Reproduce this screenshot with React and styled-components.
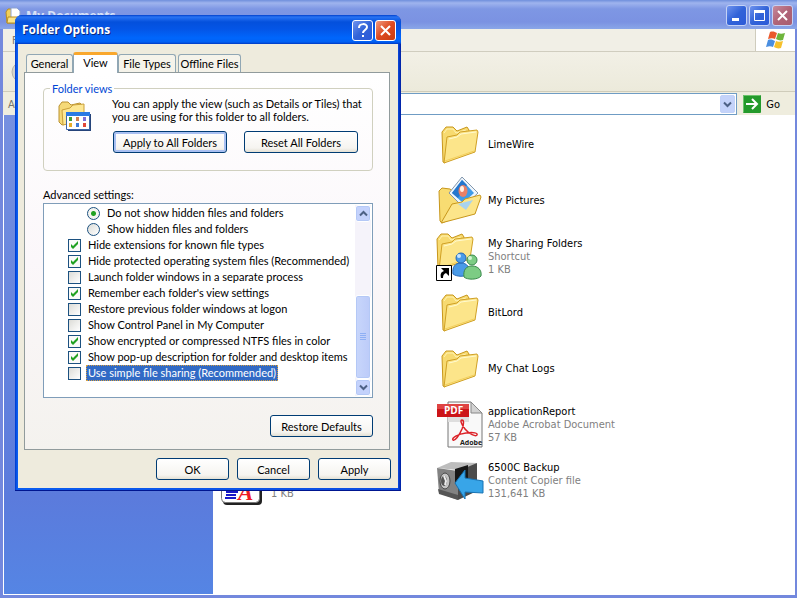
import React, { useState } from 'react';
import styled, { createGlobalStyle, css } from 'styled-components';

const GlobalStyle = createGlobalStyle`
    * { box-sizing: border-box; }
    body {
        margin: 0;
        overflow: hidden;
        font: 11px/13px 'DejaVu Sans Condensed', 'DejaVu Sans', sans-serif;
        color: #000;
    }
    button, input { font: inherit; color: inherit; margin: 0; padding: 0; }
    svg { display: block; flex: none; }
`;

/**
* Explorer window
*/
const Explorer = styled.main`
    display: flex;
    flex-direction: column;
    height: 100vh;
    padding: 0 2px 3px 3px;
    background: #7388dd;
`;

const ExplorerTitle = styled.header`
    display: flex;
    align-items: center;
    flex: none;
    height: 29px;
    gap: 4px;
    padding: 2px 4px 0 5px;
    margin: 0 -2px 0 -3px;
    background: linear-gradient(#6f8fdc 0, #9fb4ee 3px, #7e97e4 9px, #7b92e2 22px, #8aa6e8 29px);
    color: #d8e2f8;
    font: bold 12px/18px 'Open Sans', sans-serif;
`;

const ExplorerName = styled.h1`
    flex: 1;
    margin: 0;
    font: inherit;
`;

const Controls = styled.div`
    display: flex;
    gap: 2px;
`;

const tones = {
    blue: 'linear-gradient(135deg, #6f93ee, #3263d8 50%, #2c5ad8)',
    dull: 'linear-gradient(135deg, #c78a9c, #b06478 50%, #a85c70)',
    red: 'linear-gradient(135deg, #f09a80, #dd4a20 50%, #c83c10)',
};

const TitleButton = styled.button`
    display: grid;
    place-items: center;
    width: 21px;
    height: 21px;
    border: 1px solid ${(p) => (p.$active ? '#fff' : '#c4d2f6')};
    border-radius: 3px;
    background: ${(p) => tones[p.$tone]};
`;

const MenuBar = styled.nav`
    display: flex;
    flex: none;
    align-items: center;
    height: 23px;
    padding-left: 9px;
    border-bottom: 1px solid #d0cdbf;
    background: #f1efe6;
    color: #77756c;
`;

const Throbber = styled.div`
    display: grid;
    place-items: center;
    width: 40px;
    height: 22px;
    margin-left: auto;
    border-left: 1px solid #cfccbd;
    background: #fff;
`;

const ToolBar = styled.div`
    display: flex;
    flex: none;
    align-items: center;
    height: 40px;
    padding-left: 8px;
    border-bottom: 1px solid #cfccba;
    background: linear-gradient(#f2f0e6, #eceadb);
`;

const AddressBar = styled.form`
    display: flex;
    flex: none;
    align-items: center;
    height: 23px;
    gap: 6px;
    padding: 1px 15px 0 5px;
    background: #efedde;
    color: #77756c;
`;

const AddressBox = styled.div`
    display: flex;
    flex: 1;
    height: 22px;
    padding: 1px;
    border: 1px solid #6f9cc4;
    background: #fff;
`;

const AddressInput = styled.input`
    flex: 1;
    min-width: 0;
    border: 0;
    outline: 0;
    background: none;
`;

const DropButton = styled.button`
    display: grid;
    place-items: center;
    width: 15px;
    border: 1px solid #c2d2f8;
    border-radius: 2px;
    background: #c4d3fa;
`;

const GoButton = styled.button`
    display: flex;
    align-items: center;
    gap: 5px;
    border: 0;
    background: none;
    color: #000;
`;

const Body = styled.div`
    display: flex;
    flex: 1;
    min-height: 0;
    padding: 0 0 1px 1px;
    background: #fff;
`;

const TaskPane = styled.aside`
    flex: none;
    width: 209px;
    background: linear-gradient(#7690e0 0, #6180dd 60%, #5b7bdc 80%, #5585e4 100%);
`;

const FileGrid = styled.ul`
    display: grid;
    flex: 1;
    grid-template-columns: repeat(2, 217px);
    grid-auto-rows: 56px;
    align-content: start;
    margin: 0;
    padding: 1px 0 0 6px;
    list-style: none;
`;

const FileItem = styled.li`
    display: flex;
    grid-column: ${(p) => p.$column};
    grid-row: ${(p) => p.$row};
    align-items: center;
    gap: 4px;
`;

const FileText = styled.div`
    display: flex;
    flex-direction: column;
    justify-content: ${(p) => (p.$last ? 'flex-end' : 'center')};
    height: 39px;
`;

const FileMeta = styled.span`
    color: #7f7f7f;
`;

/**
* Folder Options dialog
*/
const Dialog = styled.section`
    position: absolute;
    top: 15px;
    left: 15px;
    width: 386px;
    padding: 0 3px 3px;
    border-radius: 7px 7px 0 0;
    background: linear-gradient(90deg, #0038c8, #0a5cf0 2px, #0a4ce0 383px, #001ea0);
    box-shadow: inset 0 -1px #001690;
    font: 11px/13px Lato, 'Liberation Sans', sans-serif;
`;

const DialogTitle = styled.header`
    display: flex;
    align-items: center;
    gap: 2px;
    height: 29px;
    margin: 0 -3px;
    padding: 1px 5px 0 7px;
    border-radius: 7px 7px 0 0;
    background: linear-gradient(#0040cc 0, #2a74f4 2px, #0450dc 7px, #0455e6 14px, #0066fc 23px, #0060f4 27px, #0038c0 29px);
`;

const DialogName = styled.h2`
    flex: 1;
    margin: 0;
    color: #fff;
    font: bold 12px/18px 'Open Sans', sans-serif;
    text-shadow: 1px 1px #0a2a80;
`;

const DialogBody = styled.div`
    padding: 7px 7px 8px 6px;
    background: #eeebdd;
`;

const Tabs = styled.div`
    display: flex;
    align-items: flex-end;
    height: 21px;
    padding-left: 2px;
`;

const Tab = styled.button`
    flex: none;
    width: ${(p) => p.$width}px;
    height: 18px;
    border: 1px solid #91a7b4;
    border-bottom: 0;
    border-radius: 3px 3px 0 0;
    background: #f5f3ea;
    white-space: nowrap;
    ${(p) => p.$selected && css`
        z-index: 1;
        height: 21px;
        margin-bottom: -1px;
        padding-bottom: 3px;
        border-top: 3px solid #f9a72c;
        background: #fff;
    `}
    &:last-of-type { margin-left: 2px; }
`;

const Panel = styled.div`
    display: flex;
    flex-direction: column;
    height: 378px;
    margin-right: 1px;
    padding: 9px 16px 11px 18px;
    border: 1px solid #919b9c;
    background: linear-gradient(#fff, #fbf7fa 50%, #f4f2ee);
`;

const Group = styled.fieldset`
    display: flex;
    gap: 21px;
    min-width: 0;
    height: 89px;
    margin: 0;
    padding: 2px 9px 0 14px;
    border: 1px solid #d0d0bf;
    border-radius: 4px;
`;

const Legend = styled.legend`
    margin-left: -8px;
    padding: 0 2px;
    color: #0046d5;
`;

const GroupText = styled.div`
    flex: 1;
    white-space: nowrap;
`;

const Sentence = styled.p`
    margin: 0 0 8px -1px;
`;

const ButtonRow = styled.div`
    display: flex;
    justify-content: ${(p) => (p.$end ? 'flex-end' : 'flex-start')};
    gap: ${(p) => p.$gap || 8}px;
    margin-top: ${(p) => p.$top || 0}px;
`;

const PushButton = styled.button`
    flex: none;
    width: ${(p) => p.$width || 73}px;
    height: 22px;
    border: 1px solid #003c74;
    border-radius: 3px;
    background: linear-gradient(#fff, #f6f4f0 80%, #e4e0d4);
    box-shadow: ${(p) => (p.$default ? 'inset 0 0 0 2px #a9c0f2' : 'none')};
`;

const ListLabel = styled.div`
    margin: 17px 0 2px;
`;

const ListBox = styled.div`
    display: flex;
    height: 195px;
    padding: 1px;
    border: 1px solid #7f9db9;
    background: #fff;
`;

const Settings = styled.div`
    flex: 1;
    min-width: 0;
`;

const Setting = styled.label`
    display: flex;
    align-items: center;
    gap: 5px;
    height: 16px;
    padding-left: ${(p) => (p.$radio ? 42 : 23)}px;
    white-space: nowrap;
`;

const SettingText = styled.span`
    padding: 1px 2px;
    line-height: 14px;
    ${(p) => p.$selected && css`
        outline: 1px dotted #d8a040;
        outline-offset: -1px;
        background: #316ac5;
        color: #fff;
    `}
`;

const Tick = styled.input`
    flex: none;
    appearance: none;
    width: 13px;
    height: 13px;
    border: 1px solid #1c5180;
    background: linear-gradient(135deg, #dcdcd7, #fff);
    &:checked {
        background: url("data:image/svg+xml,%3Csvg xmlns='http://www.w3.org/2000/svg' viewBox='0 0 11 11'%3E%3Cpath d='M2 4v3l2 2 5-5V1L4 6z' fill='%2321a121'/%3E%3C/svg%3E") center / 11px, #fafaf8;
    }
`;

const Dot = styled(Tick)`
    border-radius: 50%;
    &:checked { background: radial-gradient(circle, #21a121 0 2px, #f4f4f0 3px); }
`;

const ScrollBar = styled.div`
    display: flex;
    flex-direction: column;
    flex: none;
    width: 16px;
    background: #f5f3fa;
`;

const ScrollButton = styled.button`
    display: grid;
    place-items: center;
    height: 17px;
    border: 1px solid #fff;
    border-radius: 3px;
    background: #c4d2fc;
    box-shadow: inset 0 0 0 1px #b4c8f6;
`;

const ScrollTrack = styled.div`
    display: flex;
    flex: 1;
    flex-direction: column;
    justify-content: flex-end;
`;

const Thumb = styled.div`
    display: grid;
    place-items: center;
    height: 84px;
    border: 1px solid #fff;
    border-radius: 3px;
    background: linear-gradient(90deg, #c8d6fb, #bccbf9);
    box-shadow: inset 0 0 0 1px #b4c8f6;
`;

const Chevron = ({ up }) => (
    <svg width="9" height="7" viewBox="0 0 9 7">
        <path d={up ? 'M1 5.5 4.500 2 8 5.500' : 'M1 1.500 4.500 5 8 1.500'} fill="none" stroke="#4d6185" strokeWidth="2" />
    </svg>
);

const FolderShape = () => (
    <g strokeLinejoin="round">
        <path d="M6 12 10 7h7l4 4L31 7l2 3v4L9 43l-2-1z" fill="#f7da70" stroke="#c8971c" />
        <path d="M8 13 11 9h6l3 4 10-3" fill="none" stroke="#fff2b0" />
        <path d="M11 17l10-2 3-3 17-2 1 2-3 20L8 43z" fill="#fce58a" stroke="#d0a024" />
        <path d="M13 19l8-2 4-3 15-2" fill="none" stroke="#fffad0" />
        <path d="M9 41l29-10" fill="none" stroke="#f4d05c" />
    </g>
);

const FolderIcon = () => <svg width="48" height="48"><FolderShape /></svg>;

const PicturesIcon = () => (
    <svg width="48" height="48">
        <path d="M3 15 6 12l8 1 4 3 18-2v20L6 47 4 45z" fill="#f8dc72" stroke="#c8971c" />
        <path d="M26 1 42 17 27 31 13 17z" fill="#eef5fc" stroke="#8297ad" />
        <path d="M26 4 38 17 27 27 16 17z" fill="#3f9be8" />
        <path d="M26 4 31 9 22 22 16 17z" fill="#2576cc" />
        <ellipse cx="27" cy="15" rx="4.500" ry="6" fill="#e98067" />
        <ellipse cx="26" cy="13" rx="2" ry="3" fill="#fff0e4" />
        <path d="M16 28l10-2 3-3 15-4 1 2-6 17-34 9z" fill="#fce58a" stroke="#c8971c" strokeLinejoin="round" />
        <path d="M22 28l15-4-7 10z" fill="#a9d3ee" />
    </svg>
);

const SharingIcon = () => (
    <svg width="48" height="50">
        <g transform="translate(-5 -4)"><FolderShape /></g>
        <g fill="#4a9be8" stroke="#2468b8">
            <path d="M17 43c-1-7 2-11 8-11s9 4 8 11c-4 3-12 3-16 0z" />
            <circle cx="25" cy="27" r="5" />
        </g>
        <g fill="#7ccc84" stroke="#3a8a4c">
            <path d="M28 46c-1-7 2-11 8-11s10 4 9 10c-3 4-14 4-17 1z" />
            <circle cx="36" cy="29" r="5" />
        </g>
        <circle cx="23" cy="25" r="2" fill="#c6e4ff" />
        <circle cx="34" cy="27" r="2" fill="#d4f4d4" />
        <path d="M.5 34.500h15v15H.5z" fill="#fff" stroke="#000" />
        <path d="M5 37h8v8l-3-3c-2 1-3 2-3 5H5c-1-4 0-6 3-7z" fill="#000" />
    </svg>
);

const PdfIcon = () => (
    <svg width="48" height="50">
        <path d="M12 3h23l11 11v34H12z" fill="#f9f9f9" stroke="#777" />
        <path d="M35 3v11h11z" fill="#d2d2d2" stroke="#888" />
        <path d="M12 18h21v5H12z" fill="#dedede" />
        <path d="M1 5h32v13H1z" fill="#cc1418" />
        <path d="M1 5h32v5H1z" fill="#df4443" />
        <text x="8" y="15" fill="#fff" fontSize="10" fontWeight="bold" fontFamily="Open Sans">PDF</text>
        <path d="M26 21c2 0 2 4 0 9-3 7-7 12-9 11-2-2 5-6 13-7 8-1 12 0 11 2s-8-1-12-6-5-9-3-9z" fill="none" stroke="#dc2228" strokeWidth="1.500" />
        <text x="24" y="46" fill="#222" fontSize="7" fontWeight="bold" fontFamily="Open Sans">Adobe</text>
    </svg>
);

const BackupIcon = () => (
    <svg width="48" height="48">
        <path d="M1 12 15 6l26 1-9 8z" fill="#bdbdbd" />
        <path d="M1 12l21 3v29L3 37z" fill="#828282" />
        <path d="M22 15 41 7v28L22 44z" fill="#4b4b4b" />
        <path d="M19 13 32 9v14L19 28z" fill="#171717" />
        <path d="M2 33l20 6v5L3 38z" fill="#555" />
        <ellipse cx="9" cy="25" rx="5" ry="8" fill="#c4c4c4" stroke="#484848" />
        <ellipse cx="8" cy="25" rx="3" ry="5" fill="#555" />
        <path d="M8 20l2 5-1 4" fill="none" stroke="#eee" strokeWidth="2" />
        <path d="M19 27 29 14v8l18 3v12l-18-1v7z" fill="#38a5e8" stroke="#1673b4" />
    </svg>
);

const RichTextIcon = () => (
    <svg width="48" height="50">
        <rect x="4" y="3" width="39" height="47" rx="4" fill="#222" />
        <rect x="2.500" y="1.500" width="38" height="46" rx="4" fill="#fff" stroke="#777" />
        <path d="M7 34h12M7 37h12M7 40h10M6 43h11" stroke="#1818c8" strokeWidth="2" />
        <text x="19" y="45" fill="#ee1c24" fontSize="23" fontWeight="bold" fontStyle="italic" fontFamily="Liberation Serif">A</text>
    </svg>
);

const ViewsIcon = () => (
    <svg width="34" height="34">
        <path d="M1 9l3-4h6l3 3 9-2 3 3v14L4 28 1 25z" fill="#f5d978" stroke="#bb9230" />
        <path d="M4 13l8-2 3-3 11-1v16L5 28z" fill="#fde794" stroke="#caa03a" />
        <path d="M10 17h23v17H10z" fill="#26447a" />
        <path d="M8.500 15.500h23v17h-23z" fill="#fff" stroke="#3d65a8" />
        <path d="M8 15h24v4H8z" fill="#2b7ae4" />
        <g strokeWidth="4">
            <path d="M11 22h3" stroke="#3f9c38" /><path d="M18 22h3" stroke="#d08050" /><path d="M25 22h3" stroke="#7d6fd8" />
            <path d="M11 28h3" stroke="#e8ac28" /><path d="M18 28h3" stroke="#3e7cd8" /><path d="M25 28h3" stroke="#e04838" />
        </g>
    </svg>
);

const DocumentsIcon = () => (
    <svg width="17" height="17">
        <path d="M1 5l2-3h4l2 2h4v12H2z" fill="#f3cf58" stroke="#b98e22" />
        <path d="M6 1h6l3 3v7H6z" fill="#fff" stroke="#90a4d0" />
        <path d="M3 10h13l-2 6H2z" fill="#fbe58c" stroke="#b98e22" />
    </svg>
);

const FlagIcon = () => (
    <svg width="20" height="18">
        <path d="M4 1c3-1 5 0 7 1L9 8C7 7 5 7 2 8z" fill="#ea5a2c" />
        <path d="M12 2c2 1 4 1 7 0l-2 7c-3 1-5 0-7-1z" fill="#6eb53c" />
        <path d="M2 9c3-1 5 0 7 1l-2 6c-2-1-4-1-7 0z" fill="#4a8ee0" />
        <path d="M10 10c2 1 4 1 7 0l-2 7c-3 1-5 0-7-1z" fill="#f6c02c" />
    </svg>
);

const CloseMark = () => (
    <svg width="13" height="13"><path d="M2 2l9 9M11 2l-9 9" stroke="#fff" strokeWidth="2" /></svg>
);

const files = [
    { name: 'LimeWire', Icon: FolderIcon },
    { name: 'My Pictures', Icon: PicturesIcon },
    { name: 'My Sharing Folders', kind: 'Shortcut', size: '1 KB', Icon: SharingIcon },
    { name: 'BitLord', Icon: FolderIcon },
    { name: 'My Chat Logs', Icon: FolderIcon },
    { name: 'applicationReport', kind: 'Adobe Acrobat Document', size: '57 KB', Icon: PdfIcon },
    { name: '6500C Backup', kind: 'Content Copier file', size: '131,641 KB', Icon: BackupIcon },
];

const initialOptions = [
    ['Hide extensions for known file types', true],
    ['Hide protected operating system files (Recommended)', true],
    ['Launch folder windows in a separate process', false],
    ["Remember each folder's view settings", true],
    ['Restore previous folder windows at logon', false],
    ['Show Control Panel in My Computer', false],
    ['Show encrypted or compressed NTFS files in color', true],
    ['Show pop-up description for folder and desktop items', true],
    ['Use simple file sharing (Recommended)', false],
];

const FolderOptions = () => {
    const [options, setOptions] = useState(initialOptions);
    const [hidden, setHidden] = useState(0);

    const toggle = (index) => {
        setOptions(options.map(([text, on], i) => [text, i === index ? !on : on]));
    };

    return (
        <Dialog role="dialog" aria-labelledby="dialog-name">
            <DialogTitle>
                <DialogName id="dialog-name">Folder Options</DialogName>
                <TitleButton $tone="blue" $active aria-label="Help">
                    <svg width="13" height="15">
                        <path d="M3 5c0-5 8-5 8-1 0 3-4 3-4 6M7 12v2" fill="none" stroke="#fff" strokeWidth="2" />
                    </svg>
                </TitleButton>
                <TitleButton $tone="red" $active aria-label="Close"><CloseMark /></TitleButton>
            </DialogTitle>
            <DialogBody>
                <Tabs role="tablist">
                    <Tab role="tab" $width={47}>General</Tab>
                    <Tab role="tab" $width={45} $selected aria-selected="true">View</Tab>
                    <Tab role="tab" $width={58}>File Types</Tab>
                    <Tab role="tab" $width={63}>Offline Files</Tab>
                </Tabs>
                <Panel role="tabpanel">
                    <Group>
                        <Legend>Folder views</Legend>
                        <ViewsIcon />
                        <GroupText>
                            <Sentence>
                                You can apply the view (such as Details or Tiles) that<br />
                                you are using for this folder to all folders.
                            </Sentence>
                            <ButtonRow $gap={17}>
                                <PushButton $width={114} $default>Apply to All Folders</PushButton>
                                <PushButton $width={114}>Reset All Folders</PushButton>
                            </ButtonRow>
                        </GroupText>
                    </Group>
                    <ListLabel id="advanced">Advanced settings:</ListLabel>
                    <ListBox>
                        <Settings role="group" aria-labelledby="advanced">
                            {['Do not show hidden files and folders', 'Show hidden files and folders'].map((text, i) => (
                                <Setting key={text} $radio>
                                    <Dot type="radio" name="hidden" checked={hidden === i} onChange={() => setHidden(i)} />
                                    <SettingText>{text}</SettingText>
                                </Setting>
                            ))}
                            {options.map(([text, on], i) => (
                                <Setting key={text}>
                                    <Tick type="checkbox" checked={on} onChange={() => toggle(i)} />
                                    <SettingText $selected={i === options.length - 1}>{text}</SettingText>
                                </Setting>
                            ))}
                        </Settings>
                        <ScrollBar>
                            <ScrollButton aria-label="Scroll up"><Chevron up /></ScrollButton>
                            <ScrollTrack>
                                <Thumb>
                                    <svg width="6" height="8">
                                        <path d="M0 .5h6M0 2.500h6M0 4.500h6M0 6.500h6" stroke="#8fb0f4" />
                                    </svg>
                                </Thumb>
                            </ScrollTrack>
                            <ScrollButton aria-label="Scroll down"><Chevron /></ScrollButton>
                        </ScrollBar>
                    </ListBox>
                    <ButtonRow $end $top={17}>
                        <PushButton $width={103}>Restore Defaults</PushButton>
                    </ButtonRow>
                </Panel>
                <ButtonRow $end $top={8}>
                    <PushButton>OK</PushButton>
                    <PushButton>Cancel</PushButton>
                    <PushButton>Apply</PushButton>
                </ButtonRow>
            </DialogBody>
        </Dialog>
    );
};

const App = () => (
    <>
        <GlobalStyle />
        <Explorer>
            <ExplorerTitle>
                <DocumentsIcon />
                <ExplorerName>My Documents</ExplorerName>
                <Controls>
                    <TitleButton $tone="blue" aria-label="Minimize">
                        <svg width="13" height="13"><path d="M2 10.500h7" stroke="#fff" strokeWidth="3" /></svg>
                    </TitleButton>
                    <TitleButton $tone="blue" aria-label="Maximize">
                        <svg width="13" height="13">
                            <path d="M1.500 2v9.500h10V2" fill="none" stroke="#fff" />
                            <path d="M1 2.500h11" stroke="#fff" strokeWidth="3" />
                        </svg>
                    </TitleButton>
                    <TitleButton $tone="dull" aria-label="Close"><CloseMark /></TitleButton>
                </Controls>
            </ExplorerTitle>
            <MenuBar>
                <span>File</span>
                <Throbber><FlagIcon /></Throbber>
            </MenuBar>
            <ToolBar>
                <svg width="22" height="22"><circle cx="11" cy="11" r="10" fill="#d5d4cc" stroke="#b5b4aa" /></svg>
            </ToolBar>
            <AddressBar onSubmit={(e) => e.preventDefault()}>
                <label htmlFor="address">Address</label>
                <AddressBox>
                    <AddressInput id="address" />
                    <DropButton type="button" aria-label="Show addresses"><Chevron /></DropButton>
                </AddressBox>
                <GoButton>
                    <svg width="18" height="18">
                        <rect width="18" height="18" rx="1" fill="#249a2c" />
                        <path d="M.5 17V.5H17" fill="none" stroke="#6cc46c" />
                        <path d="M3 9h11M9 4l5 5-5 5" fill="none" stroke="#fff" strokeWidth="2" />
                    </svg>
                    Go
                </GoButton>
            </AddressBar>
            <Body>
                <TaskPane />
                <FileGrid>
                    <FileItem $column={1} $row={7}>
                        <RichTextIcon />
                        <FileText $last><FileMeta>1 KB</FileMeta></FileText>
                    </FileItem>
                    {files.map(({ name, kind, size, Icon }, i) => (
                        <FileItem key={name} $column={2} $row={i + 1}>
                            <Icon />
                            <FileText>
                                <span>{name}</span>
                                {kind && <FileMeta>{kind}</FileMeta>}
                                {size && <FileMeta>{size}</FileMeta>}
                            </FileText>
                        </FileItem>
                    ))}
                </FileGrid>
            </Body>
        </Explorer>
        <FolderOptions />
    </>
);

export default App;
